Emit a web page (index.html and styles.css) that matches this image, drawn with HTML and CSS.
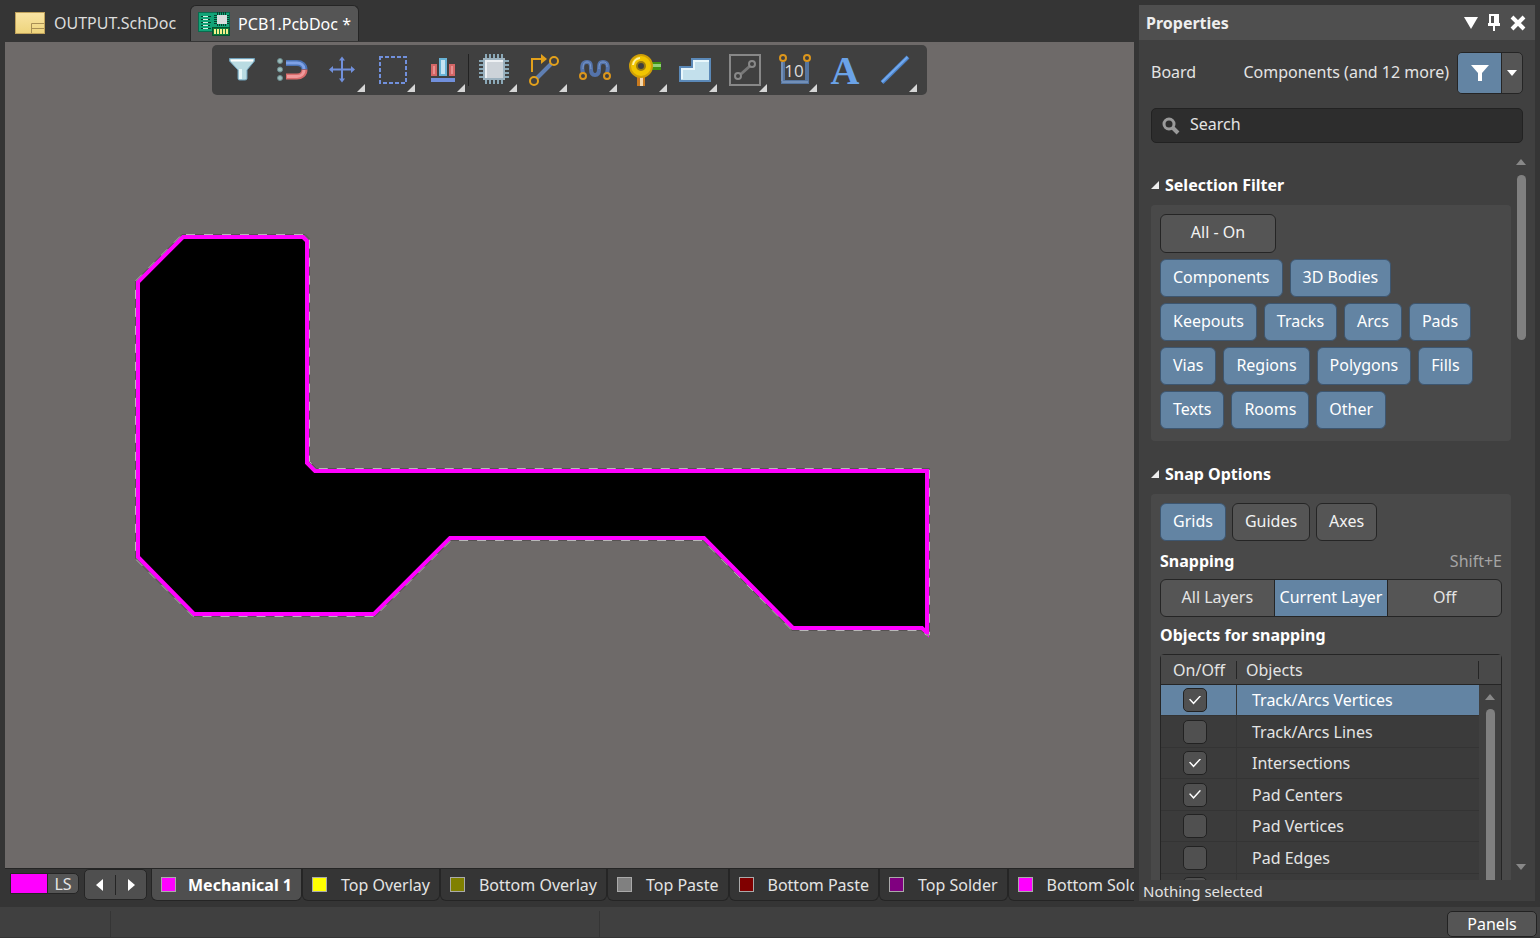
FILE: index.html
```
<!DOCTYPE html>
<html lang="en">
<head>
    <meta charset="UTF-8">
    <meta name="viewport" content="width=device-width, initial-scale=1.0">
    <title>PCB1.PcbDoc</title>
    <link rel="stylesheet" href="styles.css">
</head>
<body>
    <main>
        <div class="workspace">
            <nav class="doc-tabs">
                <a href="#sch" class="doc-tab">
                    <svg width="30" height="22" viewBox="0 0 30 22">
                        <defs>
                            <linearGradient id="sheet" x1="0" y1="0" x2="0" y2="1">
                                <stop offset="0" stop-color="#f9e4a4"/>
                                <stop offset="1" stop-color="#eed47c"/>
                            </linearGradient>
                        </defs>
                        <rect x="0.5" y="0.5" width="29" height="21" fill="url(#sheet)" stroke="#c0a25c"/>
                        <path d="M16.5 21V11.5H29M16.5 16.5H29" fill="none" stroke="#a98f55"/>
                    </svg>
                    <span>OUTPUT.SchDoc</span>
                </a>
                <a href="#pcb" class="doc-tab active">
                    <svg width="32" height="24" viewBox="0 0 32 24">
                        <rect x="0.5" y="0.5" width="31" height="19" fill="#12a377" stroke="#0a6b4e"/>
                        <path d="M3 4.5h10M3 7.5h9M3 10.5h10M3 13.5h9M3 16.5h10" stroke="#043d2a"/>
                        <path d="M5 4.5h5M5 7.5h5M5 10.5h5M5 13.5h5M5 16.5h5" stroke="#d5efe2"/>
                        <path d="M19.5 0v14M21.5 0v14M23.5 0v14M25.5 0v14M27.5 0v14M16 3.5h15M16 5.5h15M16 7.5h15M16 9.5h15M16 11.5h15" stroke="#05402d"/>
                        <rect x="19" y="3" width="10" height="9" fill="#d9dddd"/>
                        <rect x="14.5" y="15.5" width="17" height="8" fill="#0b7a3c" stroke="#07512f"/>
                        <path d="M17 17v5M20 17v5M23 17v5M26 17v5M29 17v5" stroke="#f3f08a" stroke-width="2"/>
                    </svg>
                    <span>PCB1.PcbDoc *</span>
                </a>
            </nav>

            <div class="canvas">
                <div class="toolbar">
                    <button type="button" aria-label="Filter">
                        <svg viewBox="0 0 50 50">
                            <path d="M12.5 13.5H37.5V16L30 25V33.5Q30 35 28 35H22.5Q21 35 21 33.5V25L12.5 16Z" fill="#b9dbe2" stroke="#6fa0ba"/>
                            <path d="M14 15.5H36" stroke="#fff" stroke-width="2"/>
                            <path d="M23.5 24V34" stroke="#e6f6f8" stroke-width="3"/>
                        </svg>
                    </button>
                    <button type="button" aria-label="Snap">
                        <svg viewBox="0 0 50 50">
                            <g fill="#9dbcbb" stroke="#6b8c8f">
                                <circle cx="13" cy="16" r="2.5"/>
                                <circle cx="13" cy="24.5" r="2.5"/>
                                <circle cx="13" cy="33" r="2.5"/>
                            </g>
                            <path d="M19 18H30C34.5 18 37.5 20.5 37.5 24.5" fill="none" stroke="#4a72b4" stroke-width="6"/>
                            <path d="M37.5 24.5C37.5 29 34 31.5 30 31.5H19" fill="none" stroke="#d96c6c" stroke-width="6"/>
                            <path d="M19 18H30C34 18 37 20.5 37 24" fill="none" stroke="#7ea1e6" stroke-width="3"/>
                            <path d="M37 25C37 29 34 31.5 30 31.5H20" fill="none" stroke="#f0999b" stroke-width="3"/>
                        </svg>
                    </button>
                    <button type="button" aria-label="Move">
                        <svg viewBox="0 0 50 50">
                            <path d="M14 24.5H36M25 13V36" stroke="#7190dc" stroke-width="2"/>
                            <path d="M12 24.5l4-3.5v7zM38 24.5l-4-3.5v7zM25 11.5l-3 4h6zM25 37.5l-3-4h6z" fill="#7190dc"/>
                            <path class="more" d="M48 39V47H40Z"/>
                        </svg>
                    </button>
                    <button type="button" aria-label="Select area">
                        <svg viewBox="0 0 50 50">
                            <rect x="13" y="12" width="26" height="26" fill="none" stroke="#7190dc" stroke-width="2" stroke-dasharray="4 2" stroke-dashoffset="1"/>
                            <path class="more" d="M48 39V47H40Z"/>
                        </svg>
                    </button>
                    <button type="button" aria-label="Align">
                        <svg viewBox="0 0 50 50">
                            <g fill="#e89090" stroke="#d46666" stroke-width="2">
                                <rect x="15" y="20" width="4" height="10"/>
                                <rect x="33" y="20" width="4" height="10"/>
                            </g>
                            <rect x="23" y="14" width="6" height="16" fill="#c4e4f2" stroke="#68b3d6" stroke-width="2"/>
                            <rect x="14" y="33" width="24" height="4" fill="#7190dc"/>
                            <path class="more" d="M48 39V47H40Z"/>
                        </svg>
                    </button>
                    <span class="divider"></span>
                    <button type="button" aria-label="Place component">
                        <svg viewBox="0 0 50 50">
                            <path d="M17 9V39M21 9V39M25 9V39M29 9V39M33 9V39M10 16H40M10 20H40M10 24H40M10 28H40M10 32H40" stroke="#8ba9b8" stroke-width="2"/>
                            <rect x="15" y="14" width="20" height="20" fill="#cdd3d9" stroke="#9db2bf" stroke-width="2"/>
                            <path d="M17 33V16H34" fill="none" stroke="#eef1f4" stroke-width="2"/>
                            <path class="more" d="M48 39V47H40Z"/>
                        </svg>
                    </button>
                    <button type="button" aria-label="Route">
                        <svg viewBox="0 0 50 50">
                            <path d="M18 33L32 19" stroke="#5f7fb3" stroke-width="4"/>
                            <path d="M13 27V14H23" fill="none" stroke="#e3a11b" stroke-width="2"/>
                            <path d="M22 9L28 14L22 19Z" fill="#e3a11b"/>
                            <circle cx="35" cy="16" r="4" fill="none" stroke="#e3a11b" stroke-width="2"/>
                            <circle cx="15" cy="36" r="4" fill="none" stroke="#e3a11b" stroke-width="2"/>
                            <path class="more" d="M48 39V47H40Z"/>
                        </svg>
                    </button>
                    <button type="button" aria-label="Tune length">
                        <svg viewBox="0 0 50 50">
                            <path d="M14 28C12 20 14 17 18 17C22 17 22 20 22 24S23 30 26 30S30 28 30 24S30 17 34 17S40 20 38 28" fill="none" stroke="#5473aa" stroke-width="4"/>
                            <path d="M14 24C14 19 15 17 18 17C22 17 21 20 22 24M30 24C30 20 30 17 34 17S38 19 38 22" fill="none" stroke="#7c9cd0"/>
                            <circle cx="14" cy="31" r="3" fill="#404040" stroke="#dc961c" stroke-width="2"/>
                            <circle cx="38" cy="31" r="3" fill="#404040" stroke="#dc961c" stroke-width="2"/>
                            <path class="more" d="M48 39V47H40Z"/>
                        </svg>
                    </button>
                    <button type="button" aria-label="Place via">
                        <svg viewBox="0 0 50 50">
                            <rect x="32" y="17" width="10" height="8" fill="#3f9312"/>
                            <rect x="32" y="19" width="10" height="3" fill="#91d078"/>
                            <rect x="18" y="31" width="8" height="10" fill="#c97a1f"/>
                            <rect x="21" y="31" width="3" height="10" fill="#f5d9ae"/>
                            <circle cx="22" cy="21" r="11" fill="#f1c500" stroke="#cf9f08" stroke-width="2"/>
                            <path d="M14 20a8 8 0 0 1 7-7" fill="none" stroke="#fff3a3" stroke-width="2"/>
                            <circle cx="22" cy="21" r="4" fill="#404040" stroke="#9c7d10" stroke-width="2"/>
                            <path class="more" d="M48 39V47H40Z"/>
                        </svg>
                    </button>
                    <button type="button" aria-label="Place polygon">
                        <svg viewBox="0 0 50 50">
                            <path d="M11 22H23V14H41V36H11Z" fill="#c3e0ec" stroke="#5b89b8" stroke-width="2"/>
                            <path d="M13 34V24H25V16H40" fill="none" stroke="#e8f7fc" stroke-width="2"/>
                            <path class="more" d="M48 39V47H40Z"/>
                        </svg>
                    </button>
                    <button type="button" aria-label="Place keepout">
                        <svg viewBox="0 0 50 50">
                            <rect x="11" y="10" width="30" height="30" fill="none" stroke="#888" stroke-width="2"/>
                            <path d="M22 29L31 21" stroke="#777" stroke-width="3"/>
                            <circle cx="33" cy="19" r="3" fill="none" stroke="#888" stroke-width="2"/>
                            <circle cx="19" cy="31" r="3" fill="none" stroke="#888" stroke-width="2"/>
                            <path class="more" d="M48 39V47H40Z"/>
                        </svg>
                    </button>
                    <button type="button" aria-label="Place dimension">
                        <svg viewBox="0 0 50 50">
                            <path d="M14 17V37H38V17" fill="none" stroke="#56759f" stroke-width="4"/>
                            <path d="M13 17V36M13 37H39" fill="none" stroke="#8eabd0"/>
                            <circle cx="14" cy="13" r="3" fill="none" stroke="#dc961c" stroke-width="2"/>
                            <circle cx="38" cy="13" r="3" fill="none" stroke="#dc961c" stroke-width="2"/>
                            <text x="25" y="32" class="dim-text">10</text>
                            <path class="more" d="M48 39V47H40Z"/>
                        </svg>
                    </button>
                    <button type="button" aria-label="Place text">
                        <svg viewBox="0 0 50 50">
                            <text x="26" y="39" class="letter">A</text>
                        </svg>
                    </button>
                    <button type="button" aria-label="Place line">
                        <svg viewBox="0 0 50 50">
                            <path d="M13 37.5L39 12" stroke="#4c84cb" stroke-width="4"/>
                            <path d="M13 37L38.5 12" stroke="#73a9ee" stroke-width="2"/>
                            <path class="more" d="M48 39V47H40Z"/>
                        </svg>
                    </button>
                </div>

                <svg class="board" width="808" height="416" viewBox="130 228 808 416">
                    <path class="outline" d="M183 237H303L307 241V463L315 471H927V633L922 628H793L704 538H450L374 614H194L138 557V282Z"/>
                    <path class="outline-edge" d="M182 234.5H305L309.5 239V461.5L316.5 468.5H929.5V635H926L921 630.5H792L703 540.5H451L375 616.5H193L135.5 559V281Z"/>
                    <path class="outline-dash" d="M182 234.5H305L309.5 239V461.5L316.5 468.5H929.5V635H926L921 630.5H792L703 540.5H451L375 616.5H193L135.5 559V281Z"/>
                </svg>
            </div>

            <div class="layer-bar">
                <button type="button" class="layer-set"><i></i><span>LS</span></button>
                <div class="layer-nav">
                    <button type="button" aria-label="Previous layer"><svg width="8" height="12" viewBox="0 0 8 12"><path d="M7 0V12L0 6Z"/></svg></button>
                    <button type="button" aria-label="Next layer"><svg width="8" height="12" viewBox="0 0 8 12"><path d="M1 0V12L8 6Z"/></svg></button>
                </div>
                <button type="button" class="layer active"><i class="magenta"></i>Mechanical 1</button>
                <button type="button" class="layer"><i class="yellow"></i>Top Overlay</button>
                <button type="button" class="layer"><i class="olive"></i>Bottom Overlay</button>
                <button type="button" class="layer"><i class="gray"></i>Top Paste</button>
                <button type="button" class="layer"><i class="maroon"></i>Bottom Paste</button>
                <button type="button" class="layer"><i class="purple"></i>Top Solder</button>
                <button type="button" class="layer"><i class="magenta"></i>Bottom Solder</button>
            </div>
        </div>

        <aside class="panel">
            <header>
                <h1>Properties</h1>
                <button type="button" aria-label="Panel menu"><svg width="14" height="12" viewBox="0 0 14 12"><path d="M0 0H14L7 12Z" fill="#fff"/></svg></button>
                <button type="button" aria-label="Pin"><svg width="12" height="18" viewBox="0 0 12 18"><path d="M1 0H11V9H12V12H7V17H5V12H0V9H1Z" fill="#fff"/><path d="M3 2H6V9H3Z" fill="#4f4f4f"/></svg></button>
                <button type="button" aria-label="Close"><svg width="16" height="16" viewBox="0 0 16 16"><path d="M2 2L14 14M14 2L2 14" stroke="#fff" stroke-width="4"/></svg></button>
            </header>

            <div class="object-row">
                <span>Board</span>
                <span class="scope">Components (and 12 more)</span>
                <div class="split">
                    <button type="button" class="on" aria-label="Filter objects"><svg width="18" height="16" viewBox="0 0 18 16"><path d="M0 0H18L11 8V16H7V8Z" fill="#fff"/></svg></button>
                    <button type="button" aria-label="Filter options"><svg width="10" height="6" viewBox="0 0 10 6"><path d="M0 0H10L5 6Z" fill="#fff"/></svg></button>
                </div>
            </div>

            <label class="search">
                <svg width="18" height="18" viewBox="0 0 18 18"><circle cx="7" cy="7" r="5" fill="none" stroke="#9a9a9a" stroke-width="3"/><path d="M11 11L16 16" stroke="#9a9a9a" stroke-width="4"/></svg>
                <input type="text" placeholder="Search" aria-label="Search">
            </label>

            <div class="scroll-area">
                <div class="sections">
                    <h2>Selection Filter</h2>
                    <section class="filter-group">
                        <div class="chips"><button type="button" class="chip all">All - On</button></div>
                        <div class="chips">
                            <button type="button" class="chip on">Components</button>
                            <button type="button" class="chip on">3D Bodies</button>
                        </div>
                        <div class="chips">
                            <button type="button" class="chip on">Keepouts</button>
                            <button type="button" class="chip on">Tracks</button>
                            <button type="button" class="chip on">Arcs</button>
                            <button type="button" class="chip on">Pads</button>
                        </div>
                        <div class="chips">
                            <button type="button" class="chip on">Vias</button>
                            <button type="button" class="chip on">Regions</button>
                            <button type="button" class="chip on">Polygons</button>
                            <button type="button" class="chip on">Fills</button>
                        </div>
                        <div class="chips">
                            <button type="button" class="chip on">Texts</button>
                            <button type="button" class="chip on">Rooms</button>
                            <button type="button" class="chip on">Other</button>
                        </div>
                    </section>

                    <h2>Snap Options</h2>
                    <section class="snap-group">
                        <div class="chips">
                            <button type="button" class="chip on">Grids</button>
                            <button type="button" class="chip">Guides</button>
                            <button type="button" class="chip">Axes</button>
                        </div>
                        <div class="field-title"><h3>Snapping</h3><span>Shift+E</span></div>
                        <div class="segments">
                            <button type="button">All Layers</button>
                            <button type="button" class="on">Current Layer</button>
                            <button type="button">Off</button>
                        </div>
                        <div class="field-title"><h3>Objects for snapping</h3></div>
                        <div class="object-list">
                            <table>
                                <thead>
                                    <tr><th>On/Off</th><th>Objects</th></tr>
                                </thead>
                                <tbody>
                                    <tr class="selected"><td><input type="checkbox" id="o1" checked></td><td><label for="o1">Track/Arcs Vertices</label></td></tr>
                                    <tr><td><input type="checkbox" id="o2"></td><td><label for="o2">Track/Arcs Lines</label></td></tr>
                                    <tr><td><input type="checkbox" id="o3" checked></td><td><label for="o3">Intersections</label></td></tr>
                                    <tr><td><input type="checkbox" id="o4" checked></td><td><label for="o4">Pad Centers</label></td></tr>
                                    <tr><td><input type="checkbox" id="o5"></td><td><label for="o5">Pad Vertices</label></td></tr>
                                    <tr><td><input type="checkbox" id="o6"></td><td><label for="o6">Pad Edges</label></td></tr>
                                    <tr><td><input type="checkbox" aria-label="Via Centers"></td><td></td></tr>
                                </tbody>
                            </table>
                            <div class="list-scroll">
                                <svg width="10" height="6" viewBox="0 0 10 6"><path d="M5 0L10 6H0Z"/></svg>
                                <i></i>
                            </div>
                        </div>
                    </section>
                </div>
                <div class="scrollbar">
                    <svg width="10" height="6" viewBox="0 0 10 6"><path d="M5 0L10 6H0Z"/></svg>
                    <i></i>
                    <svg class="down" width="10" height="6" viewBox="0 0 10 6"><path d="M0 0H10L5 6Z"/></svg>
                </div>
            </div>

            <footer>Nothing selected</footer>
        </aside>
    </main>

    <div class="status-bar">
        <span class="cell coords"></span>
        <span class="cell message"></span>
        <button type="button" class="panels">Panels</button>
    </div>
</body>
</html>
```
FILE: styles.css
```
* {
    box-sizing: border-box;
}
body {
    font-family: "Noto Sans", "Open Sans", sans-serif;
    font-size: 16px;
    line-height: 20px;
    margin: 0;
    height: 100vh;
    display: flex;
    flex-direction: column;
    overflow: hidden;
    background: #353535;
    color: #e4e4e4;
}
button {
    font: inherit;
    color: inherit;
    background: none;
    border: none;
    margin: 0;
    padding: 0;
    white-space: nowrap;
    cursor: pointer;
}
svg {
    display: block;
    flex: none;
}
h1, h2, h3 {
    margin: 0;
    font-size: 16px;
    font-weight: bold;
    color: #fff;
}
main {
    flex: 1;
    min-height: 0;
    display: flex;
    gap: 5px;
    padding: 0 5px 6px;
}

/* Workspace */
.workspace {
    flex: 1;
    min-width: 0;
    display: flex;
    flex-direction: column;
}
.doc-tabs {
    display: flex;
    align-items: flex-end;
    height: 42px;
    padding-bottom: 1px;
}
.doc-tab {
    display: flex;
    align-items: center;
    gap: 9px;
    height: 36px;
    padding: 0 14px 0 10px;
    color: #dcdcdc;
    text-decoration: none;
    white-space: nowrap;
}
.doc-tab.active {
    gap: 8px;
    padding: 0 7px;
    border: 1px solid #252525;
    border-bottom: none;
    border-radius: 6px 6px 0 0;
    background: #555;
    color: #fff;
}
.canvas {
    flex: 1;
    min-height: 0;
    position: relative;
    overflow: hidden;
    background: #6e6a69;
    padding-top: 3px;
    border-bottom: 1px solid #252525;
}
.toolbar {
    position: relative;
    z-index: 1;
    display: flex;
    align-items: center;
    width: fit-content;
    margin: 0 auto;
    padding: 0 8px 0 5px;
    border-radius: 5px;
    background: #404040;
}
.toolbar button, .toolbar svg {
    width: 50px;
    height: 50px;
}
.toolbar .divider {
    width: 2px;
    height: 32px;
    border-right: 1px solid #222;
}
.more {
    fill: #d6d6d6;
}
.dim-text {
    font-size: 17px;
    font-family: "Open Sans", sans-serif;
    fill: #ddd;
    text-anchor: middle;
}
.letter {
    font: bold 40px "Liberation Serif", serif;
    fill: #6ba3e8;
    text-anchor: middle;
}
.board {
    position: absolute;
    left: 125px;
    top: 186px;
}
.outline {
    fill: #000;
    stroke: #f0f;
    stroke-width: 4;
}
.outline-edge {
    fill: none;
    stroke: #565252;
}
.outline-dash {
    fill: none;
    stroke: #b8b8b8;
    stroke-dasharray: 9 9;
    stroke-dashoffset: 14;
}

/* Layer tabs */
.layer-bar {
    display: flex;
    height: 32px;
    overflow: hidden;
}
.layer-set {
    display: flex;
    flex: none;
    align-items: center;
    height: 21px;
    margin: 4px 5px 0 5px;
    border: 1px solid #252525;
    border-radius: 0 5px 5px 0;
    background: #555;
}
.layer-set i {
    width: 37px;
    height: 19px;
    background: #f0f;
    border-right: 1px solid #252525;
}
.layer-set span {
    width: 30px;
}
.layer-nav {
    display: flex;
    flex: none;
    width: 63px;
    height: 31px;
    margin-right: 4px;
    border: 1px solid #252525;
    border-radius: 5px;
    background: #4f4f4f;
    align-items: center;
}
.layer-nav button {
    flex: 1;
    height: 20px;
    display: flex;
    align-items: center;
    justify-content: center;
    fill: #fff;
}
.layer-nav button + button {
    border-left: 1px solid #252525;
}
.layer {
    display: flex;
    flex: none;
    align-items: center;
    gap: 14px;
    height: 32px;
    padding: 0 9px;
    border: 1px solid #252525;
    border-top: none;
    border-radius: 0 0 6px 6px;
}
.layer.active {
    gap: 12px;
    background: #4f4f4f;
    color: #fff;
    font-weight: bold;
}
.layer i {
    width: 15px;
    height: 15px;
    border: 1px solid #aaa;
}
.magenta { background: #f0f; }
.yellow { background: #ff0; }
.olive { background: #808000; }
.gray { background: #808080; }
.maroon { background: #800000; }
.purple { background: #800080; }

/* Properties panel */
.panel {
    width: 396px;
    margin-top: 5px;
    display: flex;
    flex-direction: column;
    background: #404040;
}
.panel header {
    display: flex;
    align-items: center;
    gap: 10px;
    height: 35px;
    padding: 0 9px 0 7px;
    background: #4f4f4f;
}
.panel h1 {
    flex: 1;
    color: #eee;
}
.object-row {
    display: flex;
    align-items: center;
    height: 42px;
    margin: 12px 12px 14px;
}
.object-row span {
    padding-bottom: 2px;
}
.scope {
    margin-left: auto;
    margin-right: 8px;
}
.split {
    display: flex;
    width: 66px;
    height: 42px;
    border: 1px solid #252525;
    border-radius: 5px;
    overflow: hidden;
    background: #555;
}
.split button {
    flex: 1;
    display: flex;
    align-items: center;
    justify-content: center;
}
.split .on {
    flex: none;
    width: 44px;
    border-right: 1px solid #252525;
}
.on {
    background: #6384a3;
    color: #fff;
}
.search {
    display: flex;
    align-items: center;
    gap: 10px;
    height: 35px;
    margin: 0 12px;
    padding: 0 10px;
    border: 1px solid #222;
    border-radius: 5px;
    background: #2d2d2d;
}
.search input {
    flex: 1;
    font: inherit;
    color: #e4e4e4;
    background: none;
    border: none;
    padding: 0 0 3px;
    outline: none;
}
.search input::placeholder {
    color: #e4e4e4;
    opacity: 1;
}
.scroll-area {
    flex: 1;
    min-height: 0;
    display: flex;
    margin-top: 12px;
    overflow: hidden;
}
.sections {
    flex: 1;
    padding: 0 5px 0 12px;
    height: 100%;
    overflow: hidden;
}
.sections h2 {
    display: flex;
    align-items: center;
    gap: 6px;
    height: 20px;
    margin: 20px 0 10px;
}
.sections h2::before {
    content: "";
    width: 8px;
    height: 8px;
    background: #eee;
    clip-path: polygon(100% 0, 100% 100%, 0 100%);
}
.sections section {
    padding: 9px;
    border-radius: 4px;
    background: #494949;
}
.sections .filter-group {
    padding-bottom: 12px;
    margin-bottom: 23px;
}
.chips {
    display: flex;
    gap: 6px;
    margin-bottom: 6px;
}
.filter-group .chips {
    gap: 7px;
}
.chip {
    height: 38px;
    padding: 0 12px 2px;
    border: 1px solid #252525;
    border-radius: 6px;
    background: #555;
    color: #f2f2f2;
}
.chip.on {
    border-color: #3d5670;
    background: #6384a3;
    color: #fff;
}
.chip.all {
    width: 116px;
    height: 39px;
    padding-bottom: 4px;
}
.filter-group .chips:last-child {
    margin-bottom: 0;
}
.field-title {
    display: flex;
    justify-content: space-between;
    align-items: center;
    height: 20px;
    margin: 10px 0 8px;
}
.segments + .field-title {
    margin: 8px 0 9px;
}
.field-title span {
    color: #a5a5a5;
}
.segments {
    display: flex;
    height: 38px;
    border: 1px solid #252525;
    border-radius: 6px;
    overflow: hidden;
    background: #555;
}
.segments button {
    flex: 1;
    padding-bottom: 2px;
}
.segments button + button {
    border-left: 1px solid #252525;
}
.object-list {
    display: flex;
    border: 1px solid #252525;
    border-radius: 4px 4px 0 0;
}
.object-list table {
    flex: 1;
    border-collapse: separate;
    border-spacing: 0;
    background: #3b3b3b;
}
.object-list th {
    height: 30px;
    padding: 0;
    font-weight: normal;
    text-align: left;
    background: linear-gradient(#252525, #252525) right 6px / 1px 18px no-repeat #494949;
    border-bottom: 1px solid #252525;
}
.object-list th:first-child {
    width: 76px;
    text-align: center;
}
.object-list th:last-child {
    padding-left: 9px;
}
.object-list td {
    height: 32px;
    padding: 0;
    border-bottom: 1px solid #343434;
}
.object-list tr:nth-child(odd) td {
    height: 31px;
}
.object-list td:first-child {
    border-right: 1px solid #343434;
    padding-left: 22px;
}
.object-list td:last-child {
    padding-left: 15px;
}
.object-list .selected td {
    background: #6384a3;
    color: #fff;
}
.object-list input {
    appearance: none;
    display: grid;
    place-items: center;
    width: 24px;
    height: 24px;
    margin: 0;
    border: 1px solid #222;
    border-radius: 5px;
    background: #505050;
}
.object-list input:checked::before {
    content: "";
    width: 12px;
    height: 9px;
    background: #fff;
    clip-path: polygon(0 45%, 10% 36%, 38% 74%, 90% 0, 100% 8%, 38% 100%);
}
.list-scroll {
    width: 22px;
    display: flex;
    flex-direction: column;
    align-items: center;
    gap: 9px;
    padding-top: 39px;
    background: linear-gradient(#494949 29px, #252525 29px, #252525 30px, #404040 30px);
    fill: #888;
}
.list-scroll i {
    flex: 1;
    width: 9px;
    border-radius: 5px 5px 0 0;
    background: #808080;
}
.scrollbar {
    width: 19px;
    display: flex;
    flex-direction: column;
    align-items: center;
    gap: 10px;
    padding: 4px 9px 10px 0;
    fill: #888;
}
.scrollbar i {
    width: 9px;
    height: 165px;
    border-radius: 5px;
    background: #808080;
}
.scrollbar .down {
    margin-top: auto;
}
.panel footer {
    height: 21px;
    padding: 1px 0 0 4px;
    font-size: 15px;
}

/* Status bar */
.status-bar {
    display: flex;
    height: 31px;
    padding: 4px 3px 0 0;
    background: #404040;
    border-bottom: 1px solid #353535;
}
.status-bar .cell {
    border-right: 1px solid #353535;
}
.coords {
    width: 111px;
}
.message {
    width: 489px;
}
.panels {
    width: 90px;
    margin-left: auto;
    border: 1px solid #222;
    border-radius: 5px;
    background: #555;
    color: #fff;
}
```
